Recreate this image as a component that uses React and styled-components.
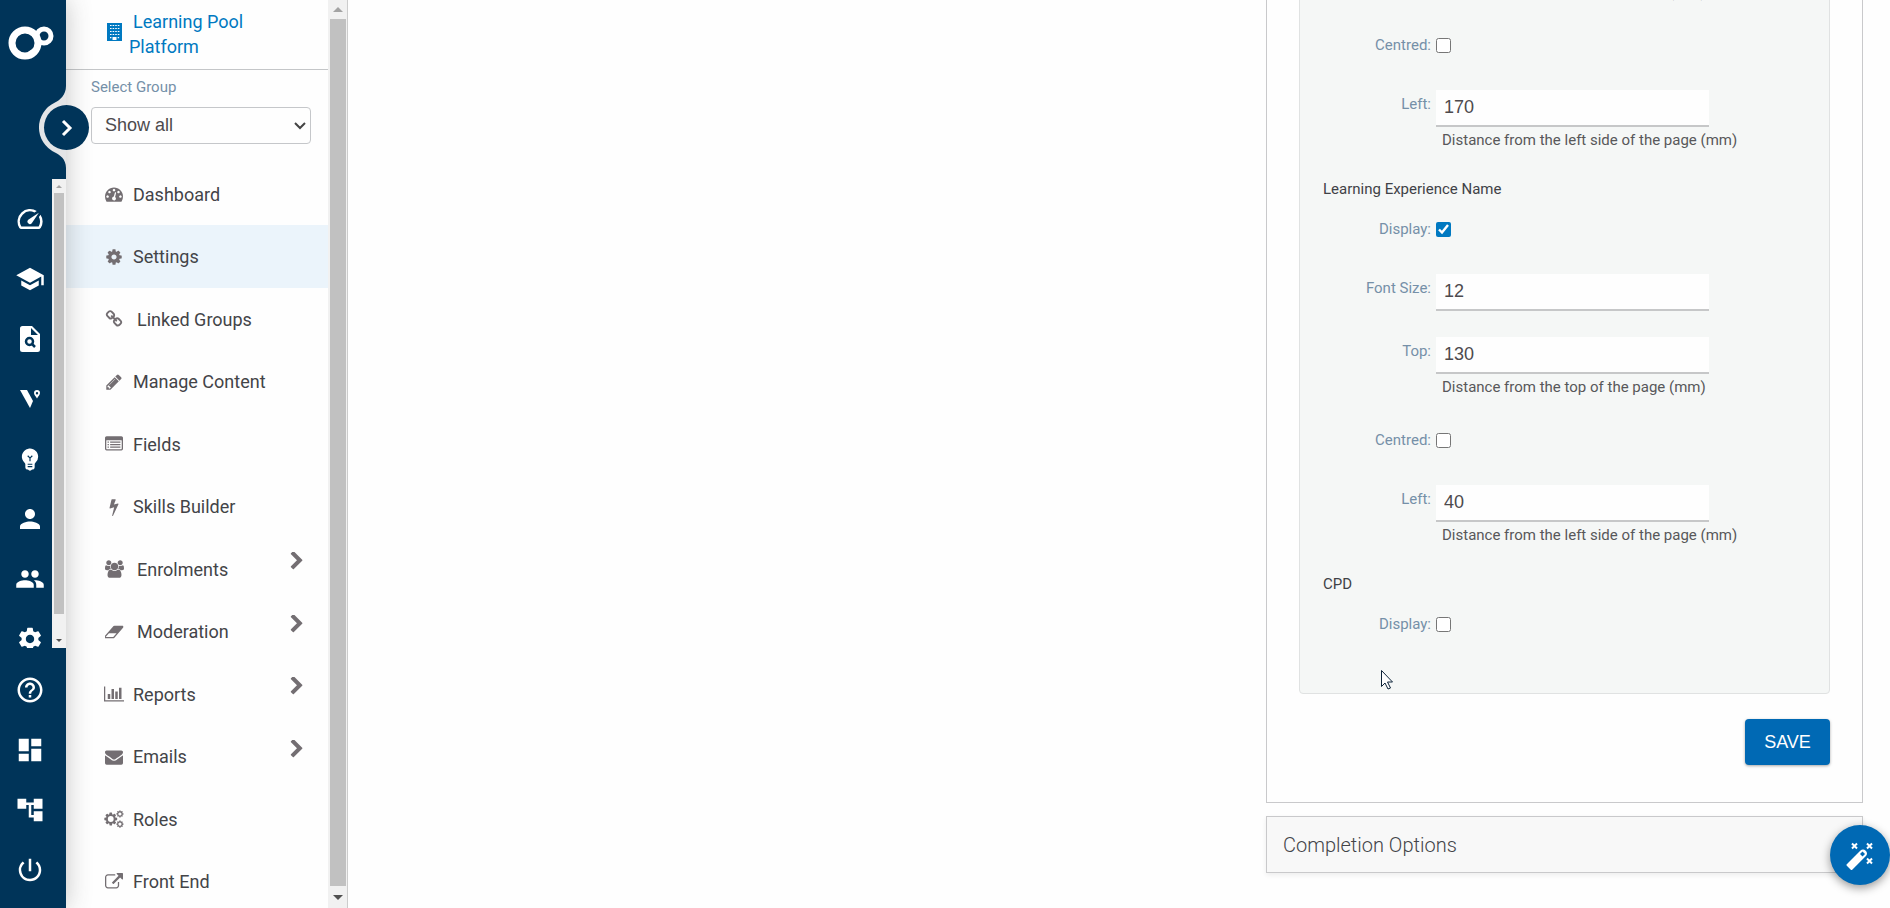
import React from "react";
import styled, { createGlobalStyle } from "styled-components";
import {
  MdSpeed, MdSchool, MdEmojiObjects, MdPerson, MdGroup, MdSettings,
  MdHelpOutline, MdDashboard, MdAccountTree, MdPowerSettingsNew,
} from "react-icons/md";

const GlobalStyle = createGlobalStyle`
  * { box-sizing: border-box; }
  body { margin: 0; background: #fefefe; color: #434448; font-family: Roboto, sans-serif; font-size: 15px; }
  button, input, select { font-family: "Liberation Sans", Arial, sans-serif; }
`;

const Page = styled.div`
  display: flex;
  height: 100vh;
  overflow: hidden;
`;

/* ---------- dark icon rail ---------- */
const Rail = styled.nav`
  position: relative;
  z-index: 2;
  flex: none;
  width: 66px;
  display: flex;
  flex-direction: column;
  background: #003459;
  box-shadow: 0 0 26px rgba(60, 60, 60, 0.3);
`;
const Brand = styled.a`
  display: block;
  height: 179px;
  padding: 26px 0 0 8px;
`;
const Notch = styled.svg`
  position: absolute;
  left: 38px;
  top: 86px;
`;
const ExpandButton = styled.button`
  position: absolute;
  left: 44px;
  top: 105px;
  width: 45px;
  height: 45px;
  border: 0;
  border-radius: 50%;
  background: #003459;
  padding: 0;
  display: grid;
  place-items: center;
`;
const RailScroll = styled.div`
  flex: 1;
  min-height: 0;
  display: flex;
  overflow: hidden;
`;
const RailList = styled.div`
  flex: 1;
  display: flex;
  flex-direction: column;
  align-items: center;
  padding: 10px 0 0 8px;
`;
const RailFooter = styled.div`
  flex: none;
  width: 60px;
  display: flex;
  flex-direction: column;
  align-items: center;
  padding-bottom: 8px;
  padding-top: 12px;
`;
const RailLink = styled.a`
  flex: none;
  height: 60px;
  width: 44px;
  display: grid;
  place-items: center;
  color: #fff;
`;

/* ---------- scrollbars ---------- */
const Bar = styled.div`
  flex: none;
  width: ${(p) => p.$width}px;
  display: flex;
  flex-direction: column;
  align-items: center;
  background: #f1f1f1;
`;
const Arrow = styled.span`
  flex: none;
  height: ${(p) => p.$space}px;
  display: grid;
  place-items: ${(p) => (p.$low ? "end" : "center")} center;
  padding-bottom: ${(p) => (p.$low ? 6 : 0)}px;
  &::after {
    content: "";
    border: ${(p) => p.$size}px solid transparent;
    border-top-width: 0;
    border-bottom: ${(p) => p.$size}px solid ${(p) => (p.$down ? "#505050" : "#a3a3a3")};
    transform: ${(p) => (p.$down ? "rotate(180deg)" : "none")};
  }
`;
const Thumb = styled.span`
  flex: 1;
  width: ${(p) => p.$width}px;
  background: #c1c1c1;
`;

/* ---------- group menu ---------- */
const Side = styled.aside`
  flex: none;
  width: 282px;
  display: flex;
  border-right: 1px solid #ccc;
  overflow: hidden;
`;
const SideContent = styled.div`
  flex: 1;
  min-width: 0;
`;
const PlatformLink = styled.a`
  display: flex;
  height: 70px;
  padding: 9px 16px 0 41px;
  gap: 7px;
  border-bottom: 1px solid #c4c6c8;
  color: #0079c1;
  font-size: 18px;
  line-height: 25px;
  text-decoration: none;
  svg { flex: none; margin-top: 14px; }
`;
const PlatformName = styled.span`
  text-indent: 4px;
`;
const GroupField = styled.div`
  display: flex;
  flex-direction: column;
  padding: 8px 17px 0 25px;
  gap: 11px;
  height: 93px;
`;
const GroupLabel = styled.label`
  color: #7590a8;
  font-size: 15px;
  line-height: 18px;
`;
const SelectWrap = styled.div`
  display: grid;
  align-items: center;
  > * { grid-area: 1 / 1; }
  svg { justify-self: end; margin-right: 5px; pointer-events: none; }
`;
const GroupSelect = styled.select`
  appearance: none;
  width: 100%;
  height: 37px;
  padding: 0 13px 2px;
  border: 1px solid #c5c7ca;
  border-radius: 4px;
  background: #fefefe;
  color: #4d4a4d;
  font-size: 18px;
`;
const MenuList = styled.ul`
  list-style: none;
  margin: 0;
  padding: 0;
`;
const MenuLink = styled.a`
  display: grid;
  grid-template-columns: 22px 1fr 16px;
  align-items: center;
  column-gap: 8px;
  height: ${(p) => p.$tall ? 63 : 62}px;
  padding: 0 23px 0 37px;
  background: ${(p) => (p.$active ? "#ebf4fb" : "transparent")};
  color: #434448;
  font-size: 18px;
  text-decoration: none;
  > svg:first-child { justify-self: center; }
  > svg { fill: #736e72; }
  > svg:last-child:not(:first-child) { margin-bottom: 16px; }
`;
const MenuText = styled.span`
  padding-left: ${(p) => (p.$wide ? 4 : 0)}px;
`;

/* ---------- settings form ---------- */
const Main = styled.main`
  flex: 1;
  min-width: 0;
  display: flex;
  justify-content: flex-end;
  align-items: flex-end;
  padding: 0 27px 35px 40px;
`;
const Accordion = styled.div`
  width: 597px;
  display: flex;
  flex-direction: column;
  gap: 13px;
`;
const Panel = styled.section`
  border: 1px solid #c9c9cb;
  padding: 0 32px 37px;
  display: flex;
  flex-direction: column;
`;
const Fieldset = styled.div`
  border: 1px solid #e0e2e2;
  border-radius: 4px;
  background: #f5f7f6;
  padding: 0 24px 24px 23px;
`;
const SectionTitle = styled.h3`
  margin: 0;
  height: 36px;
  font-size: 15px;
  font-weight: 400;
  line-height: 20px;
  color: #3f4247;
`;
const Row = styled.div`
  display: grid;
  grid-template-columns: 108px 1fr;
  column-gap: 5px;
  height: ${(p) => ({ check: 59, field: 63, hint: 89 }[p.$kind])}px;
  padding-top: ${(p) => (p.$kind === "check" ? 4 : 0)}px;
  align-content: start;
`;
const RowLabel = styled.label`
  justify-self: end;
  color: #7590a8;
  font-size: 15px;
  line-height: 20px;
  padding-top: ${(p) => (p.$field ? 4 : 0)}px;
`;
const Tick = styled.input`
  width: 15px;
  height: 15px;
  margin: 3px 0 0;
  accent-color: #0079c1;
`;
const NumberInput = styled.input`
  display: block;
  width: 273px;
  height: 37px;
  border: 0;
  border-bottom: 2px solid #c6c7c8;
  background: #fefefe;
  padding: 0 8px;
  color: #4d4a4d;
  font-size: 18px;
`;
const Hint = styled.p`
  margin: 3px 0 0 6px;
  line-height: 20px;
  color: #58585a;
`;
const SaveButton = styled.button`
  align-self: flex-end;
  margin-top: 25px;
  width: 85px;
  height: 46px;
  border: 0;
  border-radius: 4px;
  background: #0069b4;
  color: #fff;
  font-size: 18px;
  box-shadow: 0 1px 3px rgba(0, 0, 0, 0.35);
`;
const CollapsedPanel = styled.button`
  height: 57px;
  padding: 0 16px;
  border: 1px solid #c9c9cb;
  background: #f8f8f8;
  box-shadow: 0 2px 5px rgba(0, 0, 0, 0.07);
  text-align: left;
  color: #434448;
  font-family: Roboto, sans-serif;
  font-size: 20px;
  font-weight: 300;
`;
const WandButton = styled.button`
  position: fixed;
  right: 0;
  bottom: 23px;
  width: 60px;
  height: 60px;
  border: 0;
  border-radius: 50%;
  background: #0069b4;
  box-shadow: 0 3px 10px rgba(0, 0, 0, 0.4);
  padding: 0;
  display: grid;
  place-items: center;
`;
const Pointer = styled.svg`
  position: fixed;
  left: 1380px;
  top: 669px;
`;

/* ---------- drawings ---------- */
const COG = "M1152 896q0-106-75-181t-181-75-181 75-75 181 75 181 181 75 181-75 75-181zm512-109v222q0 12-8 23t-20 13l-185 28q-19 54-39 91 35 50 107 138 10 12 10 25t-9 23q-27 37-99 108t-94 71q-12 0-26-9l-138-108q-44 23-91 38-16 136-29 186-7 28-36 28h-222q-14 0-24.5-8.5t-11.5-21.5l-28-184q-49-16-90-37l-141 107q-10 9-25 9-14 0-25-11-126-114-165-168-7-10-7-23 0-12 8-23 15-21 51-66.5t54-70.5q-27-50-41-99l-183-27q-13-2-21-12.5t-8-23.5v-222q0-12 8-23t19-13l186-28q14-46 39-92-40-57-107-138-10-12-10-24 0-10 9-23 26-36 98.5-107.5t94.5-71.5q13 0 26 10l138 107q44-23 91-38 16-136 29-186 7-28 36-28h222q14 0 24.5 8.5t11.5 21.5l28 184q49 16 90 37l142-107q9-9 24-9 13 0 25 10 129 119 165 170 7 8 7 22 0 12-8 23-15 21-51 66.5t-54 70.5q26 50 41 98l183 28q13 2 21 12.5t8 23.5z";

const GLYPHS = {
  gauge: [1792, "M384 1152q0-53-37.5-90.5t-90.5-37.5-90.5 37.5-37.5 90.5 37.5 90.5 90.5 37.5 90.5-37.5 37.5-90.5zm192-448q0-53-37.5-90.5t-90.5-37.5-90.5 37.5-37.5 90.5 37.5 90.5 90.5 37.5 90.5-37.5 37.5-90.5zm428 481l101-382q6-26-7.5-48.5t-38.5-29.5-48 6.5-30 39.5l-101 382q-60 5-107 43.5t-63 98.5q-20 77 20 146t117 89 146-20 89-117q16-60-6-117t-72-91zm660-33q0-53-37.5-90.5t-90.5-37.5-90.5 37.5-37.5 90.5 37.5 90.5 90.5 37.5 90.5-37.5 37.5-90.5zm-640-640q0-53-37.5-90.5t-90.5-37.5-90.5 37.5-37.5 90.5 37.5 90.5 90.5 37.5 90.5-37.5 37.5-90.5zm448 192q0-53-37.5-90.5t-90.5-37.5-90.5 37.5-37.5 90.5 37.5 90.5 90.5 37.5 90.5-37.5 37.5-90.5zm320 448q0 261-141 483-19 29-54 29h-1402q-35 0-54-29-141-221-141-483 0-182 71-348t191-286 286-191 348-71 348 71 286 191 191 286 71 348z"],
  cog: [1792, COG],
  link: [1792, "M1520 1216q0-40-28-68l-208-208q-28-28-68-28-42 0-72 32 3 3 19 18.5t21.5 21.5 15 19 13 25.5 3.5 27.5q0 40-28 68t-68 28q-15 0-27.5-3.5t-25.5-13-19-15-21.5-21.5-18.5-19q-33 31-33 73 0 40 28 68l206 207q27 27 68 27 40 0 68-26l147-146q28-28 28-67zm-703-705q0-40-28-68l-206-207q-28-28-68-28-39 0-68 27l-147 146q-28 28-28 67 0 40 28 68l208 208q27 27 68 27 42 0 72-31-3-3-19-18.5t-21.5-21.5-15-19-13-25.5-3.5-27.5q0-40 28-68t68-28q15 0 27.5 3.5t25.5 13 19 15 21.5 21.5 18.5 19q33-31 33-73zm895 705q0 120-85 203l-147 146q-83 83-203 83-121 0-204-85l-206-207q-83-83-83-203 0-123 88-209l-88-88q-86 88-208 88-120 0-204-84l-208-208q-84-84-84-204t85-203l147-146q83-83 203-83 121 0 204 85l206 207q83 83 83 203 0 123-88 209l88 88q86-88 208-88 120 0 204 84l208 208q84 84 84 204z"],
  pencil: [1792, "M491 1536l91-91-235-235-91 91v107h128v128h107zm523-928q0-22-22-22-10 0-17 7l-542 542q-7 7-7 17 0 22 22 22 10 0 17-7l542-542q7-7 7-17zm-54-192l416 416-832 832h-416v-416zm683 96q0 53-37 90l-166 166-416-416 166-165q36-38 90-38 53 0 91 38l235 234q37 39 37 91z"],
  list: [1792, "M256 1152h128v128h-128zM256 896h128v128h-128zM256 640h128v128h-128zM512 1152h1024v128h-1024zM512 896h1024v128h-1024zM512 640h1024v128h-1024zM1664 1376v-832q0-32-32-32h-1472q-32 0-32 32v832q0 32 32 32h1472q32 0 32-32zM1792 288v1088q0 66-47 113t-113 47h-1472q-66 0-113-47t-47-113v-1088q0-66 47-113t113-47h1472q66 0 113 47t47 113z"],
  bolt: [1792, "M1333 566q18 20 7 44l-540 1157q-13 25-42 25-4 0-14-2-17-5-25.5-19t-4.5-30l197-808-406 101q-4 1-12 1-18 0-31-11-18-15-13-39l201-825q4-14 16-23t28-9h328q19 0 32 12.5t13 29.5q0 8-5 18l-171 463 396-98q8-2 12-2 19 0 34 15z"],
  users: [1920, "M593 896q-162 5-265 128h-134q-82 0-138-40.5t-56-118.5q0-353 124-353 6 0 43.5 21t97.5 42.5 119 21.5q67 0 133-23-5 37-5 66 0 139 81 256zm1071 637q0 120-73 189.5t-194 69.5h-874q-121 0-194-69.5t-73-189.5q0-53 3.5-103.5t14-109 26.5-108.5 43-97.5 62-81 85.5-53.5 111.5-20q10 0 43 21.5t73 48 107 48 135 21.5 135-21.5 107-48 73-48 43-21.5q61 0 111.5 20t85.5 53.5 62 81 43 97.5 26.5 108.5 14 109 3.5 103.5zm-1024-1277q0 106-75 181t-181 75-181-75-75-181 75-181 181-75 181 75 75 181zm704 384q0 159-112.5 271.5t-271.5 112.5-271.5-112.5-112.5-271.5 112.5-271.5 271.5-112.5 271.5 112.5 112.5 271.5zm576 225q0 78-56 118.5t-138 40.5h-134q-103-123-265-128 81-117 81-256 0-29-5-66 66 23 133 23 59 0 119-21.5t97.5-42.5 43.5-21q124 0 124 353zm-128-609q0 106-75 181t-181 75-181-75-75-181 75-181 181-75 181 75 75 181z"],
  eraser: [1920, "M832 1408l336-384h-768l-336 384h768zm1013-1077q15 34 9.5 71.5t-30.5 65.5l-896 1024q-38 44-96 44h-768q-38 0-69.5-20.5t-47.5-54.5q-15-34-9.5-71.5t30.5-65.5l896-1024q38-44 96-44h768q38 0 69.5 20.5t47.5 54.5z"],
  chart: [2048, "M640 896v512h-256v-512h256zm384-512v1024h-256v-1024h256zm1024 1152v128h-2048v-1536h128v1408h1920zm-640-896v768h-256v-768h256zm384-384v1152h-256v-1152h256z"],
  envelope: [1792, "M1792 710v794q0 66-47 113t-113 47h-1472q-66 0-113-47t-47-113v-794q44 49 101 87 362 246 497 345 57 42 92.5 65.5t94.5 48 110 24.5h2q51 0 110-24.5t94.5-48 92.5-65.5q170-123 498-345 57-39 100-87zm0-294q0 79-49 151t-122 123q-376 261-468 325-10 7-42.5 31t-54 38.5-52 32.5-57.5 27-50 9h-2q-23 0-50-9t-57.5-27-52-32.5-54-38.5-42.5-31q-91-64-262-182.5t-205-142.5q-62-42-117-115.5t-55-136.5q0-78 41.5-130t118.5-52h1472q65 0 112.5 47t47.5 113z"],
  external: [1792, "M1408 928v320q0 119-84.5 203.5t-203.5 84.5h-832q-119 0-203.5-84.5t-84.5-203.5v-832q0-119 84.5-203.5t203.5-84.5h704q14 0 23 9t9 23v64q0 14-9 23t-23 9h-704q-66 0-113 47t-47 113v832q0 66 47 113t113 47h832q66 0 113-47t47-113v-320q0-14 9-23t23-9h64q14 0 23 9t9 23zm384-864v512q0 26-19 45t-45 19-45-19l-176-176-652 652q-10 10-23 10t-23-10l-114-114q-10-10-10-23t10-23l652-652-176-176q-19-19-19-45t19-45 45-19h512q26 0 45 19t19 45z"],
};

function Glyph({ name }) {
  if (name === "cogs") {
    return (
      <svg width="20" height="18" viewBox="0 0 1920 1792" aria-hidden="true">
        <path transform="translate(-107 150) scale(.83)" d={COG} />
        <path transform="translate(1140 -20) scale(.46)" d={COG} />
        <path transform="translate(1140 990) scale(.46)" d={COG} />
        <g fill="#fefefe">
          <circle cx="637" cy="894" r="290" />
          <circle cx="1552" cy="392" r="155" />
          <circle cx="1552" cy="1402" r="155" />
        </g>
      </svg>
    );
  }
  const [w, d] = GLYPHS[name];
  return (
    <svg width={Math.round(w / 100)} height="18" viewBox={`0 0 ${w} 1792`} aria-hidden="true">
      <path d={d} />
    </svg>
  );
}

const Chevron = () => (
  <svg width="16" height="18" viewBox="200 100 1400 1600" aria-hidden="true">
    <path d="M1363 877l-742 742q-19 19-45 19t-45-19l-166-166q-19-19-19-45t19-45l531-531-531-531q-19-19-19-45t19-45l166-166q19-19 45-19t45 19l742 742q19 19 19 45t-19 45z" />
  </svg>
);

const Building = () => (
  <svg width="15" height="18" viewBox="0 0 15 18" aria-hidden="true">
    <path fill="#0079c1" d="M0 0h15v18H0z" />
    <path
      stroke="#fefefe"
      strokeWidth="1"
      strokeDasharray="1.6 1"
      d="M3 2.5h10M3 5.500h10M3 8.500h10M3 11.500h10"
    />
    <path fill="#fefefe" d="M3 14h1.400v1.200H3zM10.700 14h1.400v1.200h-1.400zM5.500 14h4v3h-4z" />
  </svg>
);

const Logo = () => (
  <svg width="47" height="34" viewBox="0 0 47 34" fill="none" stroke="#fff" aria-hidden="true">
    <circle cx="17" cy="17" r="13" strokeWidth="7" />
    <circle cx="36" cy="10" r="7" strokeWidth="5" />
    <path d="M19 26.500l6-4v4z" fill="#fff" stroke="none" />
  </svg>
);

const PageSearch = () => (
  <svg width="20" height="26" viewBox="0 0 20 26" aria-hidden="true">
    <path
      fill="#fff"
      fillRule="evenodd"
      d="M2.500 0H12l8 8v15.500a2.500 2.500 0 0 1-2.500 2.500h-15A2.500 2.500 0 0 1 0 23.500v-21A2.500 2.500 0 0 1 2.500 0zM11 2v7h7z"
    />
    <circle cx="9.500" cy="15.500" r="3.500" fill="none" stroke="#003459" strokeWidth="2.500" />
    <path stroke="#003459" strokeWidth="2.500" d="M11.500 17.500l3.500 3.500" />
  </svg>
);

const VLogo = () => (
  <svg width="22" height="20" viewBox="0 0 22 20" fill="#fff" aria-hidden="true">
    <path d="M1 1h7l6 11-3 7z" />
    <path fillRule="evenodd" d="M18 1a3 3 0 0 1 3 3c0 2-1.500 3-3 5.500C16.500 7 15 6 15 4a3 3 0 0 1 3-3zm0 2a1.200 1.200 0 1 0 0 2.400 1.200 1.200 0 0 0 0-2.400z" />
  </svg>
);

const railTop = [
  ["Dashboard", <MdSpeed size={30} />],
  ["Learning", <MdSchool size={30} />],
  ["Search", <PageSearch />],
  ["Venues", <VLogo />],
  ["Ideas", <MdEmojiObjects size={28} />],
  ["Profile", <MdPerson size={30} />],
  ["People", <MdGroup size={30} />],
  ["Settings", <MdSettings size={28} />],
];
const railBottom = [
  ["Help", <MdHelpOutline size={30} />],
  ["Layout", <MdDashboard size={30} />],
  ["Hierarchy", <MdAccountTree size={30} />],
  ["Log out", <MdPowerSettingsNew size={30} />],
];
const menu = [
  { icon: "gauge", text: "Dashboard" },
  { icon: "cog", text: "Settings", active: true },
  { icon: "link", text: "Linked Groups", wide: true },
  { icon: "pencil", text: "Manage Content" },
  { icon: "list", text: "Fields" },
  { icon: "bolt", text: "Skills Builder" },
  { icon: "users", text: "Enrolments", wide: true, more: true },
  { icon: "eraser", text: "Moderation", wide: true, more: true },
  { icon: "chart", text: "Reports", more: true },
  { icon: "envelope", text: "Emails", more: true },
  { icon: "cogs", text: "Roles" },
  { icon: "external", text: "Front End" },
];

function CheckRow({ id, label, checked }) {
  return (
    <Row $kind="check">
      <RowLabel htmlFor={id}>{label}:</RowLabel>
      <Tick id={id} type="checkbox" defaultChecked={checked} />
    </Row>
  );
}

function FieldRow({ id, label, value, hint }) {
  return (
    <Row $kind={hint ? "hint" : "field"}>
      <RowLabel $field htmlFor={id}>{label}:</RowLabel>
      <div>
        <NumberInput id={id} type="text" defaultValue={value} />
        {hint && <Hint>{hint}</Hint>}
      </div>
    </Row>
  );
}

export default function App() {
  return (
    <Page>
      <GlobalStyle />
      <Rail aria-label="Main">
        <Brand href="#" aria-label="Home"><Logo /></Brand>
        <Notch width="28" height="82" viewBox="0 0 28 82" aria-hidden="true">
          <path fill="#e3e4e6" d="M28 0C28 9 22 14 17 16.500A27.500 27.500 0 0 0 17 66.500C22 69 28 73 28 82z" />
        </Notch>
        <ExpandButton aria-label="Expand menu">
          <svg width="12" height="18" viewBox="0 0 12 18" fill="none" stroke="#fff" strokeWidth="3">
            <path d="M2 2l7 7-7 7" />
          </svg>
        </ExpandButton>
        <RailScroll>
          <RailList>
            {railTop.map(([name, icon]) => (
              <RailLink key={name} href="#" aria-label={name}>{icon}</RailLink>
            ))}
          </RailList>
          <Bar $width={14}>
            <Arrow $space={14} $size={3} />
            <Thumb $width={10} />
            <Arrow $space={34} $size={3} $down $low />
          </Bar>
        </RailScroll>
        <RailFooter>
          {railBottom.map(([name, icon]) => (
            <RailLink key={name} href="#" aria-label={name}>{icon}</RailLink>
          ))}
        </RailFooter>
      </Rail>

      <Side>
        <SideContent>
          <PlatformLink href="#">
            <Building />
            <PlatformName>Learning Pool Platform</PlatformName>
          </PlatformLink>
          <GroupField>
            <GroupLabel htmlFor="group">Select Group</GroupLabel>
            <SelectWrap>
              <GroupSelect id="group" defaultValue="all">
                <option value="all">Show all</option>
              </GroupSelect>
              <svg width="12" height="8" viewBox="0 0 12 8" fill="none" stroke="#444" strokeWidth="2">
                <path d="M1 1l5 5 5-5" />
              </svg>
            </SelectWrap>
          </GroupField>
          <MenuList>
            {menu.map((m, i) => (
              <li key={m.text}>
                <MenuLink href="#" $active={m.active} $tall={i % 2 === 1}>
                  <Glyph name={m.icon} />
                  <MenuText $wide={m.wide}>{m.text}</MenuText>
                  {m.more && <Chevron />}
                </MenuLink>
              </li>
            ))}
          </MenuList>
        </SideContent>
        <Bar $width={19}>
          <Arrow $space={19} $size={5} />
          <Thumb $width={16} />
          <Arrow $space={22} $size={5} $down />
        </Bar>
      </Side>

      <Main>
        <Accordion>
          <Panel>
            <Fieldset>
              <FieldRow id="prev-top" label="Top" value="130" hint="Distance from the top of the page (mm)" />
              <CheckRow id="prev-centred" label="Centred" />
              <FieldRow id="prev-left" label="Left" value="170" hint="Distance from the left side of the page (mm)" />
              <SectionTitle>Learning Experience Name</SectionTitle>
              <CheckRow id="name-display" label="Display" checked />
              <FieldRow id="name-size" label="Font Size" value="12" />
              <FieldRow id="name-top" label="Top" value="130" hint="Distance from the top of the page (mm)" />
              <CheckRow id="name-centred" label="Centred" />
              <FieldRow id="name-left" label="Left" value="40" hint="Distance from the left side of the page (mm)" />
              <SectionTitle>CPD</SectionTitle>
              <CheckRow id="cpd-display" label="Display" />
            </Fieldset>
            <SaveButton>SAVE</SaveButton>
          </Panel>
          <CollapsedPanel>Completion Options</CollapsedPanel>
        </Accordion>
      </Main>

      <WandButton aria-label="Open assistant">
        <svg width="30" height="30" viewBox="0 0 30 30" fill="none" stroke="#fff" aria-hidden="true">
          <path strokeWidth="5" strokeLinejoin="round" fill="#fff" d="M4.500 25.500L17.500 12.500" />
          <path strokeWidth="2" strokeLinejoin="round" fill="#fff" d="M2.500 25L16 11.500Q18 9.500 20 11.500T20 15.500L6.500 29z" />
          <path fill="#0069b4" stroke="none" d="M17.500 11.500l2.500 2.500-2.500 2.500-2.500-2.500z" />
          <path strokeWidth="2" d="M7 3.500l5 5M12 3.500l-5 5M22 3.500l5 5M27 3.500l-5 5M22 18.500l5 5M27 18.500l-5 5" />
        </svg>
      </WandButton>
      <Pointer width="14" height="22" viewBox="0 0 14 22" aria-hidden="true">
        <path fill="#fff" stroke="#0c2238" d="M1.500 1.500v16l3.500-3.500 3 6 2.500-1-3-6h5z" />
      </Pointer>
    </Page>
  );
}
